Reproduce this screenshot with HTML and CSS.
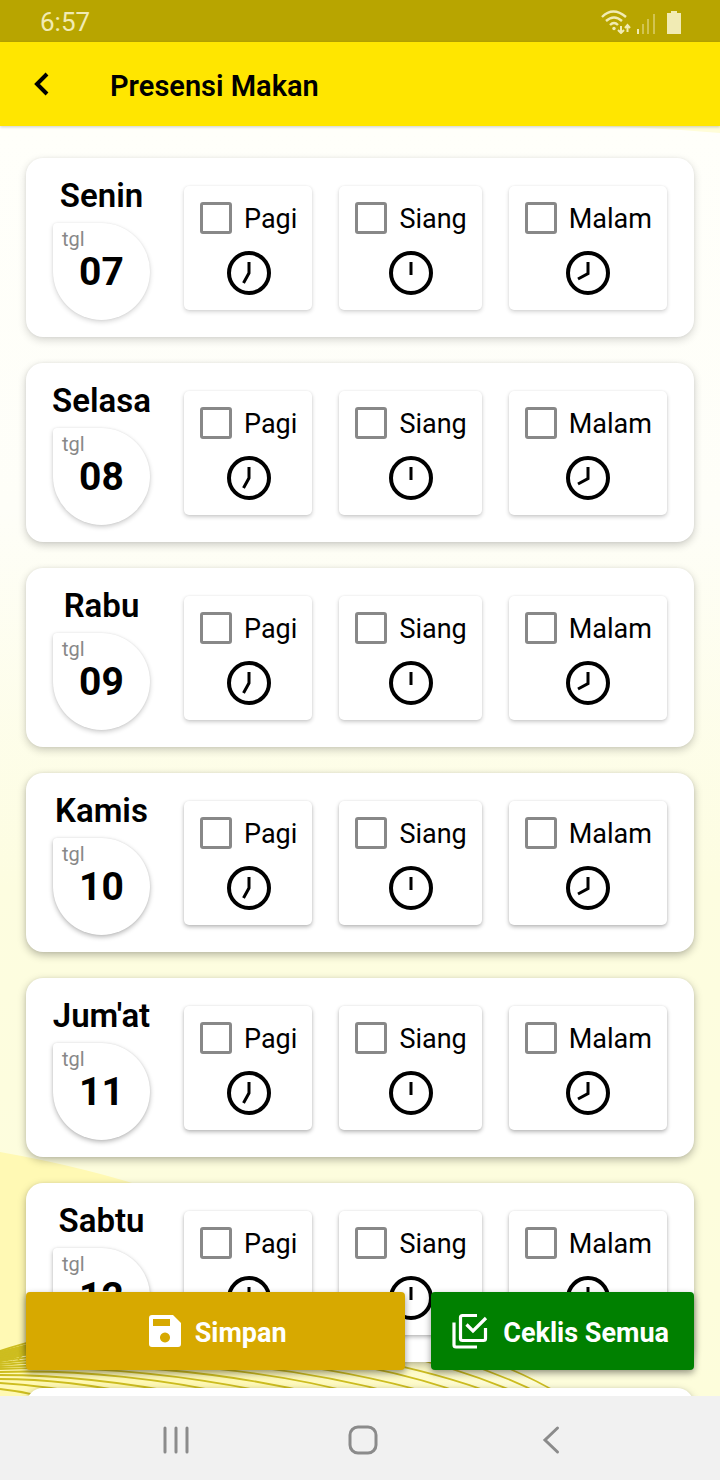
FILE: index.html
```html
<!DOCTYPE html>
<html lang="id">
<head>
<meta charset="utf-8">
<meta name="viewport" content="width=device-width, initial-scale=1">
<title>Presensi Makan</title>
<link rel="stylesheet" href="styles.css">
</head>
<body>
<svg class="defs" aria-hidden="true">
  <symbol id="clock-7" viewBox="0 0 44 44"><circle cx="22" cy="22" r="20"/><path class="hand" d="M22 11V22L16.500 32"/></symbol>
  <symbol id="clock-12" viewBox="0 0 44 44"><circle cx="22" cy="22" r="20"/><path class="hand" d="M22 11V24"/></symbol>
  <symbol id="clock-8" viewBox="0 0 44 44"><circle cx="22" cy="22" r="20"/><path class="hand" d="M22 11V22.500L12 28"/></symbol>
</svg>
<div class="screen">
  <div class="status">
    <span>6:57</span>
    <svg class="status-icons" viewBox="0 0 82 26" aria-hidden="true">
      <g fill="none" stroke="currentColor" stroke-width="2.400">
        <path d="M1 9Q12 -2 25 9M5 13Q13 6 21 13M9 17Q13 13 17 17"/>
        <path stroke-width="2" d="M20 18V25M17 22L20 25L23 22M26.500 24V17M24 20L26.500 17L29 20"/>
      </g>
      <circle cx="13" cy="20.500" r="1.700" fill="currentColor"/>
      <path fill="currentColor" d="M36 21h2v5h-2zM66 5h4V3h6v2h4v21H66z"/>
      <path fill="currentColor" opacity=".45" d="M41 16h2v10h-2zM46 11h2v15h-2zM52 6h2v20h-2z"/>
    </svg>
  </div>
  <header class="appbar">
    <button class="back" type="button" aria-label="Kembali"><svg viewBox="0 0 16 24" aria-hidden="true"><path d="M13 2L3 12L13 22"/></svg></button>
    <h1>Presensi Makan</h1>
  </header>
  <main class="content">
    <svg class="backdrop" viewBox="0 0 720 1270" preserveAspectRatio="none" aria-hidden="true">
      <defs>
        <linearGradient id="page" x1="0" y1="0" x2="0" y2="1">
          <stop offset="0" stop-color="#fffffa"/><stop offset=".3" stop-color="#fefef8"/><stop offset=".6" stop-color="#fdfde0"/><stop offset="1" stop-color="#fdfddb"/>
        </linearGradient>
        <linearGradient id="hill" x1="0" y1="0" x2="1" y2="0">
          <stop offset=".4" stop-color="#fff9b4"/><stop offset="1" stop-color="#fdfddb"/>
        </linearGradient>
      </defs>
      <path fill="url(#page)" d="M0 0H720V1270H0z"/>
      <path fill="#fffdd8" d="M560 0H720V7Q640 0 560 0z"/>
      <path fill="url(#hill)" d="M0 1026Q90 1042 160 1066Q420 1130 560 1270H0z"/>
      <path fill="#cfbe1c" d="M0 1225Q60 1208 120 1204V1212Q60 1220 0 1236z"/>
      <g class="waves">
        <path d="M0 1225C100 1190 380 1160 563 1270"/>
        <path d="M0 1227C110 1196 340 1168 545 1270"/>
        <path d="M0 1229C120 1202 320 1182 525 1270"/>
        <path d="M0 1231C100 1206 330 1205 500 1270"/>
        <path d="M0 1233C110 1212 320 1215 470 1270"/>
        <path d="M0 1235C110 1218 290 1226 440 1270"/>
        <path d="M0 1237C110 1224 270 1233 405 1270"/>
        <path d="M0 1239C100 1230 250 1238 365 1270"/>
        <path d="M0 1241C100 1235 220 1244 325 1270"/>
        <path d="M0 1243C90 1239 190 1249 285 1270"/>
        <path d="M0 1246C80 1243 170 1254 240 1270"/>
        <path d="M0 1249C60 1249 130 1257 195 1270"/>
        <path d="M0 1253C50 1253 100 1260 145 1270"/>
        <path d="M0 1257Q50 1260 95 1270M0 1263Q20 1265 40 1270"/>
        <path d="M0 1234L5 1228M6 1235L12 1226M12 1234L19 1224M18 1234L26 1223"/>
      </g>
    </svg>
    <div class="days" id="days"></div>
    <div class="actions">
      <button class="btn save" type="button">
        <svg viewBox="0 0 32 32" aria-hidden="true"><path fill="currentColor" fill-rule="evenodd" d="M3 0H24L32 8V29Q32 32 29 32H3Q0 32 0 29V3Q0 0 3 0zM4 4V11H21V4zM16 17.500a5 5 0 1 0 .01 0z"/></svg>
        <span>Simpan</span>
      </button>
      <button class="btn all" type="button">
        <svg viewBox="0 0 36 36" aria-hidden="true"><path fill="none" stroke="currentColor" stroke-width="3.200" d="M25 2.500H10.500Q8.500 2.500 8.500 4.500V25.500Q8.500 27.500 10.500 27.500H31.500Q33.500 27.500 33.500 25.500V15M2 9.500V32Q2 34 4 34H25M14.500 11.500L21 18L34 5"/></svg>
        <span>Ceklis Semua</span>
      </button>
    </div>
  </main>
  <nav class="sysnav">
    <button type="button" aria-label="Aplikasi terbaru"><svg viewBox="0 0 32 32" aria-hidden="true"><path d="M6 4V28M17 4V28M28 4V28"/></svg></button>
    <button type="button" aria-label="Beranda"><svg viewBox="0 0 32 32" aria-hidden="true"><rect x="3" y="3" width="26" height="26" rx="8"/></svg></button>
    <button type="button" aria-label="Kembali"><svg viewBox="0 0 32 32" aria-hidden="true"><path d="M22.500 4L10 16L22.500 28"/></svg></button>
  </nav>
</div>
<script src="app.js"></script>
</body>
</html>
```
FILE: styles.css
```css
* { box-sizing: border-box; }
body { margin: 0; font-family: Roboto, "Liberation Sans", sans-serif; color: #000; }
button { border: 0; padding: 0; background: none; font: inherit; color: inherit; }
svg { display: block; }
.defs { position: absolute; width: 0; height: 0; }
.screen { display: flex; flex-direction: column; height: 100vh; }

.status { display: flex; align-items: center; justify-content: space-between; height: 42px; padding: 2px 37px 0 40px; background: #b8a500; color: #f1ebb4; font-size: 26px; }
.status-icons { width: 82px; height: 26px; margin-bottom: 2px; }

.appbar { position: relative; z-index: 2; display: flex; align-items: center; height: 84px; padding: 0 34px; gap: 60px; background: #ffe600; box-shadow: 0 1px 3px rgba(0, 0, 0, .2); }
.appbar h1 { margin: 4px 0 0; font-size: 29px; font-weight: 600; line-height: 34px; }
.back svg { width: 16px; height: 24px; fill: none; stroke: #000; stroke-width: 4; }

.content { position: relative; flex: 1; min-height: 0; overflow: hidden; }
.backdrop { position: absolute; inset: 0; width: 100%; height: 100%; }
.waves { fill: none; stroke: #cdbd20; stroke-width: 1.8; }

.days { position: relative; display: flex; flex-direction: column; gap: 26px; padding: 32px 26px; }
.day { --depth: .16; display: flex; align-items: center; gap: 34px; min-height: 179px; padding: 17px 27px; border-radius: 17px; background: #fff; box-shadow: 0 3px 8px rgba(0, 0, 0, var(--depth)), 0 0 3px rgba(0, 0, 0, .06); }
.day:nth-child(n+2) { --depth: .2; }
.day:nth-child(n+4) { --depth: .28; }
.date { width: 97px; }
.date h2 { display: flex; justify-content: center; margin: 0; padding: 1px 0 7px; font-size: 33px; font-weight: 600; line-height: 40px; white-space: nowrap; }
.disc { height: 97px; padding: 4px 9px; border-radius: 4px 50% 50% 50%; background: #fff; box-shadow: 0 2px 5px rgba(0, 0, 0, var(--depth)), 0 0 2px rgba(0, 0, 0, .08); }
.disc small { display: block; font-size: 20px; line-height: 24px; color: #888; }
.disc b { display: block; text-align: center; font-size: 39px; font-weight: 700; line-height: 42px; }
.slots { flex: 1; display: flex; justify-content: space-between; }
.slot { display: flex; flex-direction: column; align-items: center; gap: 17px; padding: 16px 15px 15px 16px; border-radius: 5px; background: #fff; box-shadow: 0 2px 4px rgba(0, 0, 0, var(--depth)), 0 0 2px rgba(0, 0, 0, .08); }
.slot label { display: flex; align-items: center; gap: 12px; height: 32px; font-size: 27px; line-height: 32px; }
.slot span { padding-top: 3px; }
.slot input { appearance: none; width: 32px; height: 32px; margin: 0; border: 3px solid #888; border-radius: 3px; }
.slot input:checked { background: #d7a900; }
.slot svg { width: 44px; height: 44px; fill: none; stroke: #000; stroke-width: 4; }
.hand { stroke-width: 3; }

.actions { position: absolute; inset: auto 26px 26px; display: flex; gap: 26px; }
.btn { display: flex; align-items: center; justify-content: center; height: 78px; border-radius: 4px; color: #fff; font-size: 27px; font-weight: 700; box-shadow: 0 3px 7px rgba(0, 0, 0, .4); }
.btn span { padding-top: 3px; }
.save { flex: 1; gap: 14px; padding-left: 4px; background: #d7a900; }
.save svg { width: 32px; height: 32px; }
.all { gap: 15px; padding: 0 25px 0 21px; background: #008000; }
.all svg { width: 36px; height: 36px; }

.sysnav { display: flex; justify-content: center; align-items: center; gap: 156px; height: 84px; padding: 3px 0 0 5px; background: #f1f1f1; }
.sysnav svg { width: 32px; height: 32px; fill: none; stroke: #8b8b8b; stroke-width: 3; stroke-linecap: round; }
```
FILE: app.js
```js
const days = [["Senin", "07"], ["Selasa", "08"], ["Rabu", "09"], ["Kamis", "10"], ["Jum'at", "11"], ["Sabtu", "12"]];
const meals = [["Pagi", 7], ["Siang", 12], ["Malam", 8]];

const cards = days.map(([name, date]) => `
  <section class="day">
    <div class="date"><h2>${name}</h2><div class="disc"><small>tgl</small><b>${date}</b></div></div>
    <div class="slots">${meals.map(([meal, hour]) => `
      <div class="slot">
        <label><input type="checkbox" name="${date}-${meal}"><span>${meal}</span></label>
        <svg aria-hidden="true"><use href="#clock-${hour}"/></svg>
      </div>`).join("")}
    </div>
  </section>`);

document.getElementById("days").innerHTML = cards.join("") + '<section class="day"></section>';
```
